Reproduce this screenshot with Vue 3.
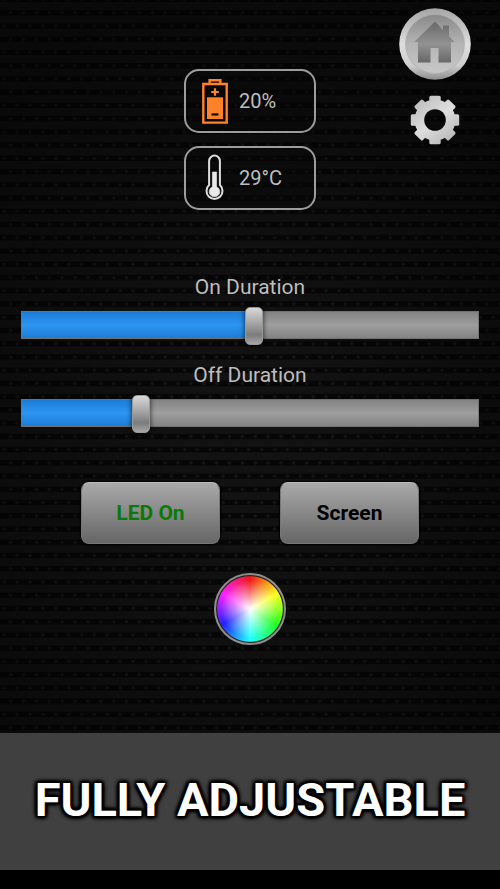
<script setup>
import { ref } from 'vue'

const ledOn = ref(true)
const sliders = ref([
  { id: 'on-duration', label: 'On Duration', value: 51 },
  { id: 'off-duration', label: 'Off Duration', value: 25 }
])
const teeth = [0, 45, 90, 135, 180, 225, 270, 315]
</script>

<template>
  <div class="page">
    <main class="panel">
      <svg class="texture" aria-hidden="true">
        <defs>
          <pattern id="mesh" x="4.3" y="6" width="12.87" height="26.48" patternUnits="userSpaceOnUse">
            <rect width="12.87" height="26.48" fill="#121212" />
            <rect y="4" width="12.87" height="5.4" fill="#060606" />
            <rect y="17.2" width="12.87" height="5.4" fill="#060606" />
            <path d="M4.2 6.7 6.4 4.6 8.6 6.7 6.4 8.800zM-2.200 19.900 0 17.800 2.200 19.900 0 22zM10.670 19.900 12.870 17.800 15.070 19.900 12.870 22z" fill="#161616" />
          </pattern>
          <radialGradient id="vignette" cx="50%" cy="60%" r="65%">
            <stop offset="0.2" stop-color="#000" stop-opacity="0" />
            <stop offset="1" stop-color="#000" stop-opacity="0.5" />
          </radialGradient>
        </defs>
        <rect width="100%" height="100%" fill="url(#mesh)" />
        <rect width="100%" height="100%" fill="url(#vignette)" />
      </svg>

      <header class="top">
        <div class="stats">
          <div class="stat">
            <svg class="stat-icon" viewBox="0 0 28 48" aria-hidden="true">
              <path d="M2.300 7h23.400v38.600H2.300zM8.600 7V3.200h10.800V7" fill="none" stroke="#ff8128" stroke-width="2.400" />
              <path d="M6 20.300h16V42H6z" fill="#ff8128" />
              <path d="M12.900 11.300h2.200v2.600h2.700v2.200h-2.700v2.700h-2.200v-2.700h-2.700v-2.200h2.700z" fill="#ff8128" />
              <path d="M10.500 36.300h7v2.300h-7z" fill="#111" />
            </svg>
            <span>20%</span>
          </div>
          <div class="stat">
            <svg class="stat-icon" viewBox="0 0 28 48" aria-hidden="true">
              <path d="M8.100 31V7a5.400 5.400 0 0 1 10.800 0v24a8 8 0 1 1-10.800 0z" fill="none" stroke="#ddd" stroke-width="2" />
              <path d="M11.400 18h4.200v14.700a5.300 5.300 0 1 1-4.200 0z" fill="#e8e8e8" stroke="#e8e8e8" stroke-width="0.600" />
            </svg>
            <span>29°C</span>
          </div>
        </div>
        <nav class="actions">
          <button class="icon-button" type="button" aria-label="Home">
            <svg class="home" viewBox="0 0 72 72">
              <defs>
                <linearGradient id="ring" x1="0" y1="0" x2="0" y2="1">
                  <stop offset="0" stop-color="#a5a5a5" />
                  <stop offset="0.500" stop-color="#dedede" />
                  <stop offset="0.800" stop-color="#cecece" />
                  <stop offset="1" stop-color="#8c8c8c" />
                </linearGradient>
                <linearGradient id="disc" x1="0" y1="0" x2="0" y2="1">
                  <stop offset="0" stop-color="#898989" />
                  <stop offset="0.500" stop-color="#b4b4b4" />
                  <stop offset="1" stop-color="#c8c8c8" />
                </linearGradient>
                <linearGradient id="house" x1="0" y1="0" x2="0" y2="1">
                  <stop offset="0" stop-color="#686868" />
                  <stop offset="0.550" stop-color="#929292" />
                  <stop offset="1" stop-color="#686868" />
                </linearGradient>
              </defs>
              <circle cx="36" cy="36" r="35.800" fill="url(#ring)" />
              <circle cx="36" cy="36" r="29.500" fill="url(#disc)" stroke="#aaa" stroke-width="0.700" />
              <path d="M36 13.500 15.300 34H19v20.500h12.500V40h8v14.500H52V34h3.800L50 28.200V17.500h-6v4.700z" fill="url(#house)" />
            </svg>
          </button>
          <button class="icon-button" type="button" aria-label="Settings">
            <svg class="gear" viewBox="0 0 50 50">
              <defs>
                <linearGradient id="steel" gradientUnits="userSpaceOnUse" x1="5" y1="0" x2="45" y2="50">
                  <stop offset="0" stop-color="#b5b5b5" />
                  <stop offset="0.500" stop-color="#dedede" />
                  <stop offset="1" stop-color="#b0b0b0" />
                </linearGradient>
                <mask id="gear-shape">
                  <circle cx="25" cy="25" r="20.500" fill="#fff" />
                  <rect v-for="a in teeth" :key="a" x="19.300" y="0.800" width="11.400" height="12" rx="1.500" fill="#fff" :transform="`rotate(${a} 25 25)`" />
                  <circle cx="25" cy="25" r="10.800" fill="#000" />
                </mask>
              </defs>
              <rect width="50" height="50" fill="url(#steel)" mask="url(#gear-shape)" />
            </svg>
          </button>
        </nav>
      </header>

      <section class="sliders">
        <div v-for="s in sliders" :key="s.id" class="slider">
          <label :for="s.id">{{ s.label }}</label>
          <input :id="s.id" v-model.number="s.value" type="range" min="0" max="100" :style="{ '--fill': s.value + '%' }" />
        </div>
      </section>

      <div class="buttons">
        <button class="key" :class="{ lit: ledOn }" type="button" @click="ledOn = !ledOn">LED On</button>
        <button class="key" type="button">Screen</button>
      </div>

      <button class="wheel" type="button" aria-label="Color"></button>
    </main>

    <footer class="banner">
      <h1>FULLY ADJUSTABLE</h1>
    </footer>
  </div>
</template>

<style>
body {
  margin: 0;
  background: #000;
}
</style>

<style scoped>
.page {
  min-height: 100vh;
  box-sizing: border-box;
  padding-bottom: 19px;
  display: flex;
  flex-direction: column;
  font-family: Roboto, "Liberation Sans", sans-serif;
  color: #bebebe;
}

.panel {
  position: relative;
  isolation: isolate;
  flex: 1;
  display: flex;
  flex-direction: column;
  align-items: center;
  overflow: hidden;
}

.texture {
  position: absolute;
  inset: 0;
  z-index: -1;
  width: 100%;
  height: 100%;
}

.top {
  align-self: stretch;
  display: grid;
  grid-template-columns: 1fr auto 1fr;
  padding-top: 8px;
}

.stats {
  grid-column: 2;
  display: flex;
  flex-direction: column;
  gap: 13px;
  padding-top: 61px;
}

.stat {
  box-sizing: border-box;
  width: 132px;
  height: 64px;
  padding-left: 15px;
  display: flex;
  align-items: center;
  gap: 10px;
  border: 2px solid #9c9c9c;
  border-radius: 15px;
  background: rgba(8, 8, 8, 0.4);
  font-size: 20px;
}

.stat-icon {
  width: 28px;
  height: 48px;
}

.actions {
  display: flex;
  flex-direction: column;
  align-items: center;
  justify-self: end;
  gap: 15px;
  padding-right: 29px;
}

.icon-button {
  padding: 0;
  border: 0;
  background: none;
  cursor: pointer;
}

.icon-button svg {
  display: block;
}

.home {
  width: 72px;
  height: 72px;
}

.gear {
  width: 50px;
  height: 50px;
}

.sliders {
  align-self: stretch;
  display: flex;
  flex-direction: column;
  gap: 18px;
  padding: 64px 21px 0;
}

.slider {
  display: flex;
  flex-direction: column;
  align-items: center;
  gap: 6px;
}

.slider label {
  font-size: 21px;
  line-height: 26px;
}

.slider input {
  appearance: none;
  width: 100%;
  height: 38px;
  margin: 0;
  background: none;
  cursor: pointer;
}

.slider input::-webkit-slider-runnable-track {
  height: 28px;
  box-sizing: border-box;
  border: 1px solid #66666699;
  background:
    linear-gradient(#1c7cd6, #2d95f2 50%, #1c7cd6) left / var(--fill) 100% no-repeat,
    linear-gradient(#838383, #9e9e9e 50%, #838383);
}

.slider input::-webkit-slider-thumb {
  appearance: none;
  width: 18px;
  height: 38px;
  margin-top: -5px;
  border: 1px solid #999;
  border-radius: 5px;
  box-sizing: border-box;
  background: linear-gradient(#d8d8d8, #a8a8a8 40%, #7c7c7c 75%, #a6a6a6);
  box-shadow: 0 0 4px 1px rgba(0, 0, 0, 0.55);
}

.buttons {
  display: flex;
  gap: 60px;
  padding-top: 50px;
}

.key {
  width: 139px;
  height: 62px;
  padding: 0;
  border: 1px solid #777;
  border-top-color: #bbb;
  border-radius: 8px;
  background: linear-gradient(#a9a9a9, #666);
  box-shadow: 0 0 2px 1px #000;
  color: #000;
  font: bold 21px Roboto, "Liberation Sans", sans-serif;
  cursor: pointer;
}

.key.lit {
  color: #087a08;
}

.wheel {
  width: 72px;
  height: 72px;
  margin: 29px 0 88px;
  padding: 0;
  border: 2px solid #8e8e8e;
  border-radius: 50%;
  background:
    radial-gradient(circle closest-side, #fff, rgba(255, 255, 255, 0.5) 40%, rgba(255, 255, 255, 0) 85%, transparent 95%, #222 98%),
    conic-gradient(#f01818, #ff2 60deg, #2f2 120deg, #2ff 180deg, #22f 240deg, #f2f 300deg, #f01818);
  cursor: pointer;
}

.banner {
  padding: 33px 16px 36px;
  background: #404040;
  text-align: center;
}

.banner h1 {
  margin: 0;
  color: #fff;
  font: bold 47px/68px Roboto, "Liberation Sans", sans-serif;
  white-space: nowrap;
  text-shadow: 0 0 3px #000, 0 0 4px #000, 0 0 5px #000, 2px 2px 3px #000, -2px -2px 3px #000, 2px -2px 3px #000, -2px 2px 3px #000, 0 0 6px #000;
}
</style>
